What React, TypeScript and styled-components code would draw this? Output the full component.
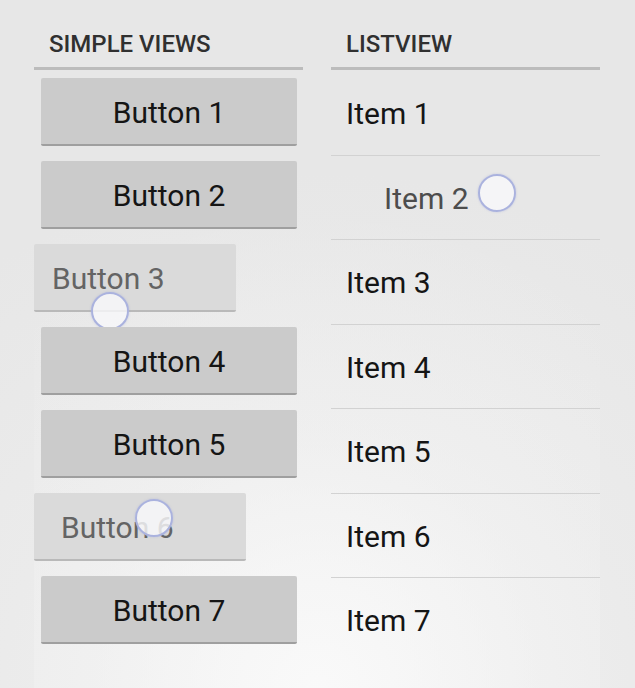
import React from "react";
import styled, { createGlobalStyle } from "styled-components";

const Global = createGlobalStyle`
  html, body {
    margin: 0;
    padding: 0;
    width: 635px;
    height: 688px;
    overflow: hidden;
    background: radial-gradient(ellipse 90% 75% at 50% 100%, #f3f3f3 0%, #ebebeb 55%, #e7e7e7 100%);
    font-family: Roboto, "Noto Sans", "Liberation Sans", sans-serif;
  }
`;

const Page = styled.div`
  width: 635px;
  height: 688px;
  box-sizing: border-box;
  padding: 0 35px 0 34px;
`;

const Panel = styled.div`
  height: 100%;
  display: grid;
  grid-template-columns: 269px 269px;
  column-gap: 28px;
  background: radial-gradient(ellipse 80% 70% at 50% 100%, rgba(250, 250, 250, 0.9) 0%, rgba(245, 245, 245, 0.4) 50%, rgba(240, 240, 240, 0) 100%);
`;

const Column = styled.section`
  display: flex;
  flex-direction: column;
`;

const Header = styled.h2`
  margin: 0;
  height: 70px;
  box-sizing: border-box;
  padding: 0 0 11px 15px;
  display: flex;
  align-items: flex-end;
  border-bottom: 3px solid #bcbcbc;
  font-size: 24px;
  font-weight: 500;
  color: #303030;
  line-height: 1;
`;

const ButtonStack = styled.div`
  display: flex;
  flex-direction: column;
  gap: 15px;
  padding-top: 8px;
`;

const Button = styled.button<{ $dragged?: boolean; $width?: number; $indent?: number }>`
  position: relative;
  box-sizing: border-box;
  height: 68px;
  width: ${(p) => (p.$dragged ? `${p.$width}px` : "256px")};
  margin-left: ${(p) => (p.$dragged ? "0" : "7px")};
  padding: 2px 0 0 ${(p) => (p.$dragged ? `${p.$indent}px` : "0")};
  display: flex;
  align-items: center;
  justify-content: ${(p) => (p.$dragged ? "flex-start" : "center")};
  border: none;
  border-radius: 2px;
  border-bottom: 2px solid ${(p) => (p.$dragged ? "#b9b9b9" : "#9f9f9f")};
  background: ${(p) => (p.$dragged ? "#dadada" : "#cbcbcb")};
  color: ${(p) => (p.$dragged ? "#646464" : "#151515")};
  font-family: Roboto, "Noto Sans", "Liberation Sans", sans-serif;
  font-size: 30px;
  font-weight: 400;
  cursor: pointer;
`;

const List = styled.ul`
  list-style: none;
  margin: 0;
  padding: 0;
`;

const Row = styled.li<{ $dragged?: boolean }>`
  position: relative;
  box-sizing: border-box;
  height: 84.5px;
  display: flex;
  align-items: center;
  padding-left: ${(p) => (p.$dragged ? "53px" : "15px")};
  padding-top: 2px;
  font-size: 30px;
  color: ${(p) => (p.$dragged ? "#4d4d4d" : "#151515")};
  & + & {
    border-top: 1px solid #d2d2d2;
  }
`;

const Touch = styled.span<{ $x: number; $y: number }>`
  position: absolute;
  left: ${(p) => p.$x - 19}px;
  top: ${(p) => p.$y - 19}px;
  width: 38px;
  height: 38px;
  box-sizing: border-box;
  border-radius: 50%;
  border: 2px solid #aab2de;
  background: rgba(248, 248, 250, 0.82);
  box-shadow: 0 0 2px rgba(150, 160, 220, 0.5);
  pointer-events: none;
`;

type Btn = { label: string; dragged?: boolean; width?: number; indent?: number; touch?: [number, number] };

const buttons: Btn[] = [
  { label: "Button 1" },
  { label: "Button 2" },
  { label: "Button 3", dragged: true, width: 202, indent: 18, touch: [76, 67] },
  { label: "Button 4" },
  { label: "Button 5" },
  { label: "Button 6", dragged: true, width: 212, indent: 27, touch: [120, 25] },
  { label: "Button 7" },
];

const items = ["Item 1", "Item 2", "Item 3", "Item 4", "Item 5", "Item 6", "Item 7"];

export default function App() {
  return (
    <>
      <Global />
      <Page>
        <Panel>
          <Column>
            <Header>SIMPLE VIEWS</Header>
            <ButtonStack>
              {buttons.map((b) => (
                <Button key={b.label} $dragged={b.dragged} $width={b.width} $indent={b.indent}>
                  {b.label}
                  {b.touch && <Touch $x={b.touch[0]} $y={b.touch[1]} />}
                </Button>
              ))}
            </ButtonStack>
          </Column>
          <Column>
            <Header>LISTVIEW</Header>
            <List>
              {items.map((it, i) => (
                <Row key={it} $dragged={i === 1}>
                  {it}
                  {i === 1 && <Touch $x={166} $y={37} />}
                </Row>
              ))}
            </List>
          </Column>
        </Panel>
      </Page>
    </>
  );
}
